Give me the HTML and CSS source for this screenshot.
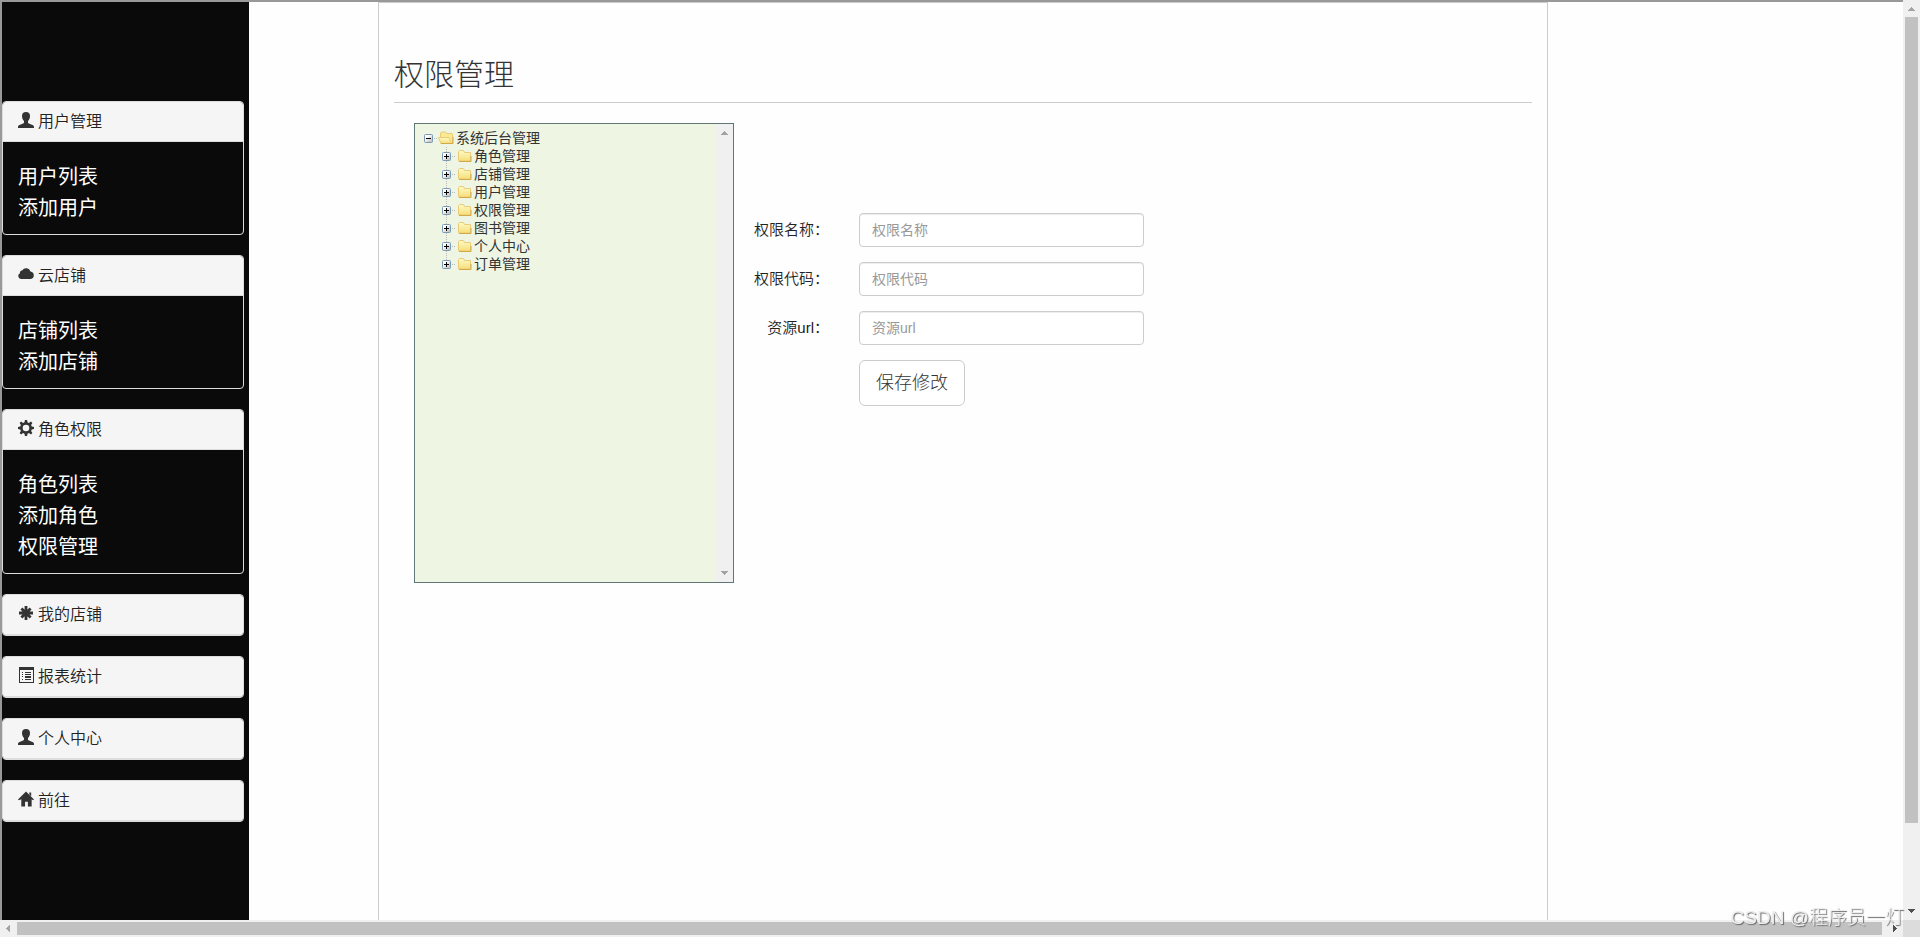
FILE: index.html
```html
<!DOCTYPE html>
<html lang="zh-CN">
<head>
<meta charset="utf-8">
<title>权限管理</title>
<link rel="stylesheet" href="styles.css">
</head>
<body>
<svg width="0" height="0" class="defs" aria-hidden="true">
  <defs>
    <linearGradient id="gold" x1="0" y1="0" x2="0" y2="1"><stop offset="0" stop-color="#fffbc4"/><stop offset="1" stop-color="#f5dd7a"/></linearGradient>
    <linearGradient id="box" x1="0" y1="0" x2="1" y2="1"><stop offset="0.3" stop-color="#fff"/><stop offset="1" stop-color="#b9b3ac"/></linearGradient>
    <symbol id="user" viewBox="0 0 16 16"><path d="M8 0C5.300 0 4 1.600 4 4c0 2 .7 3.900 2 5v1.600c0 .8-1.200 1.100-2.600 1.600C1.400 12.900 0 13.500 0 14.800V16h16v-1.200c0-1.300-1.400-1.900-3.400-2.600-1.400-.5-2.600-.8-2.600-1.600V9c1.300-1.100 2-3 2-5C12 1.600 10.700 0 8 0z"/></symbol>
    <symbol id="cloud" viewBox="0 0 16 16"><path d="M3 13a3 3 0 0 1-1-5.700A2.600 2.600 0 0 1 4.300 4.200 4.600 4.600 0 0 1 12.500 5.500 3.800 3.800 0 0 1 12.700 13z"/></symbol>
    <symbol id="cog" viewBox="0 0 16 16"><path fill-rule="evenodd" d="M6.900 0h2.200l.4 2.200 1.500.7 1.900-1.300 1.500 1.500-1.300 1.900.7 1.500 2.200.4v2.200l-2.200.4-.7 1.500 1.300 1.900-1.500 1.500-1.900-1.300-1.500.7-.4 2.200H6.900l-.4-2.200-1.500-.7-1.900 1.300-1.500-1.500 1.300-1.900-.7-1.500L0 9.100V6.900l2.200-.4L2.900 5 1.600 3.100l1.500-1.500L5 2.900l1.500-.7zM8 4.700a3.300 3.300 0 1 0 0 6.600 3.300 3.300 0 0 0 0-6.600z"/></symbol>
    <symbol id="asterisk" viewBox="0 0 16 16"><path d="M8 1v14M1 8h14M3.400 3.400l9.200 9.200M12.600 3.400l-9.200 9.200" stroke="#333" stroke-width="2.800"/></symbol>
    <symbol id="list" viewBox="0 0 16 16"><path fill-rule="evenodd" d="M1 0h15v16H1zM2 3v12h13V3z"/><path d="M4 5h1v1H4zM7 5h6v1H7zM4 7h1v1H4zM7 7h6v1H7zM4 9h1v1H4zM7 9h6v2H7zM4 12h1v1H4zM7 12h6v1H7z"/></symbol>
    <symbol id="home" viewBox="0 0 17 16"><path d="M8.500 0 17 8.500l-1 .8-1.500-1V16h-4v-5h-3v5h-4V8.300L1 9.300l-1-.8zM12 1h2v4l-2-2z"/></symbol>
    <symbol id="folder" viewBox="0 0 16 16"><path d="M2.500 3.500v9q0 .5.500.5h11q.5 0 .5-.5V5q0-.5-.5-.5H8.500l-1-2H3.500z" fill="url(#gold)" stroke="#e9cb78"/><path d="M3 13.500h12V8" fill="none" stroke="#d3a848"/></symbol>
    <symbol id="open" viewBox="0 0 16 16"><path d="M2.500 12V3l1-1h4l1 1.500h5.500l.5.500v9.500H3z" fill="#fbea92" stroke="#e9cb78"/><path d="M.5 7.500H11l2.500 6H3z" fill="url(#gold)" stroke="#e9cb78"/><path d="M3 13.500h12V7" fill="none" stroke="#d3a848"/></symbol>
    <symbol id="plus" viewBox="0 0 9 9"><rect x=".5" y=".5" width="8" height="8" rx="1" fill="url(#box)" stroke="#7898b5"/><path d="M2 4h5v1H2zM4 2h1v5H4z" fill="#000"/></symbol>
    <symbol id="minus" viewBox="0 0 9 9"><rect x=".5" y=".5" width="8" height="8" rx="1" fill="url(#box)" stroke="#7898b5"/><path d="M2 4h5v1H2z" fill="#000"/></symbol>
    <symbol id="tri-up" viewBox="0 0 7 4"><path d="M3 0h1v1h1v1h1v1h1v1H0V3h1V2h1V1h1z"/></symbol>
    <symbol id="tri-down" viewBox="0 0 7 4"><path d="M3 4h1V3h1V2h1V1h1V0H0v1h1v1h1v1h1z"/></symbol>
    <symbol id="tri-left" viewBox="0 0 4 7"><path d="M0 3v1h1v1h1v1h1v1h1V0H3v1H2v1H1v1z"/></symbol>
    <symbol id="tri-right" viewBox="0 0 4 7"><path d="M4 3v1H3v1H2v1H1v1H0V0h1v1h1v1h1v1z"/></symbol>
  </defs>
</svg>
<div class="window">
  <div class="frame">
    <nav class="sidebar">
      <section class="panel">
        <h3 class="panel-heading"><svg class="icon"><use href="#user"/></svg>用户管理</h3>
        <div class="panel-body"><a href="#">用户列表</a><a href="#">添加用户</a></div>
      </section>
      <section class="panel">
        <h3 class="panel-heading"><svg class="icon"><use href="#cloud"/></svg>云店铺</h3>
        <div class="panel-body"><a href="#">店铺列表</a><a href="#">添加店铺</a></div>
      </section>
      <section class="panel">
        <h3 class="panel-heading"><svg class="icon"><use href="#cog"/></svg>角色权限</h3>
        <div class="panel-body"><a href="#">角色列表</a><a href="#">添加角色</a><a href="#">权限管理</a></div>
      </section>
      <section class="panel"><h3 class="panel-heading"><svg class="icon"><use href="#asterisk"/></svg>我的店铺</h3></section>
      <section class="panel"><h3 class="panel-heading"><svg class="icon"><use href="#list"/></svg>报表统计</h3></section>
      <section class="panel"><h3 class="panel-heading"><svg class="icon"><use href="#user"/></svg>个人中心</h3></section>
      <section class="panel"><h3 class="panel-heading"><svg class="icon"><use href="#home"/></svg>前往</h3></section>
    </nav>
    <main class="content">
      <h1 class="title">权限管理</h1>
      <div class="columns">
        <div class="tree-box">
          <ul class="tree">
            <li>
              <div class="node"><button class="switch" aria-label="折叠"><svg><use href="#minus"/></svg></button><svg class="folder"><use href="#open"/></svg><a href="#">系统后台管理</a></div>
              <ul class="children">
                <li class="node"><button class="switch" aria-label="展开"><svg><use href="#plus"/></svg></button><svg class="folder"><use href="#folder"/></svg><a href="#">角色管理</a></li>
                <li class="node"><button class="switch" aria-label="展开"><svg><use href="#plus"/></svg></button><svg class="folder"><use href="#folder"/></svg><a href="#">店铺管理</a></li>
                <li class="node"><button class="switch" aria-label="展开"><svg><use href="#plus"/></svg></button><svg class="folder"><use href="#folder"/></svg><a href="#">用户管理</a></li>
                <li class="node"><button class="switch" aria-label="展开"><svg><use href="#plus"/></svg></button><svg class="folder"><use href="#folder"/></svg><a href="#">权限管理</a></li>
                <li class="node"><button class="switch" aria-label="展开"><svg><use href="#plus"/></svg></button><svg class="folder"><use href="#folder"/></svg><a href="#">图书管理</a></li>
                <li class="node"><button class="switch" aria-label="展开"><svg><use href="#plus"/></svg></button><svg class="folder"><use href="#folder"/></svg><a href="#">个人中心</a></li>
                <li class="node"><button class="switch" aria-label="展开"><svg><use href="#plus"/></svg></button><svg class="folder"><use href="#folder"/></svg><a href="#">订单管理</a></li>
              </ul>
            </li>
          </ul>
          <div class="bar vertical"><svg class="tri"><use href="#tri-up"/></svg><svg class="tri"><use href="#tri-down"/></svg></div>
        </div>
        <form class="form">
          <label for="name">权限名称：</label><input id="name" type="text" placeholder="权限名称">
          <label for="code">权限代码：</label><input id="code" type="text" placeholder="权限代码">
          <label for="url">资源url：</label><input id="url" type="text" placeholder="资源url">
          <button class="save" type="button">保存修改</button>
        </form>
      </div>
    </main>
  </div>
  <div class="bar vertical"><svg class="tri"><use href="#tri-up"/></svg><div class="track"><div class="thumb"></div></div><svg class="tri dark"><use href="#tri-down"/></svg></div>
  <div class="bar horizontal"><svg class="tri side"><use href="#tri-left"/></svg><div class="track"><div class="thumb"></div></div><svg class="tri side dark"><use href="#tri-right"/></svg></div>
  <div class="corner"></div>
</div>
<div class="watermark">CSDN @程序员一灯</div>
</body>
</html>
```

FILE: styles.css
```css
* { box-sizing: border-box; }
body {
  margin: 0;
  background: #fefefe;
  color: #333;
  font: 14px/20px "Liberation Sans", "Noto Sans CJK SC", sans-serif;
}
a { color: inherit; text-decoration: none; }
ul { margin: 0; padding: 0; list-style: none; }
.defs { position: absolute; }

.window {
  display: grid;
  grid-template: 1fr 17px / 1fr 17px;
  min-height: 100vh;
}
.frame {
  display: flex;
  border: solid #999;
  border-width: 2px 0 0 2px;
}

.sidebar {
  width: 247px;
  flex: none;
  padding: 99px 5px 20px 0;
  background: #0a0a0a;
}
.panel {
  margin-bottom: 20px;
  border: 1px solid #ddd;
  border-radius: 4px;
  overflow: hidden;
}
.panel-heading {
  display: flex;
  align-items: center;
  gap: 4px;
  height: 40px;
  margin: 0;
  padding: 1px 15px 0;
  border-bottom: 1px solid #ddd;
  background: #f5f5f5;
  color: #222;
  font-size: 16px;
  font-weight: 350;
}
.icon { width: 16px; height: 16px; margin-bottom: 4px; fill: #333; }
.panel-body { padding: 20px 15px 10px; }
.panel-body a {
  display: block;
  color: #fff;
  font-size: 20px;
  line-height: 31px;
}

.content {
  flex: 0 1 1170px;
  margin-left: 129px;
  padding: 0 15px;
  border: 1px solid #ccc;
  border-bottom: 0;
}
.title {
  margin: 0 0 20px;
  padding: 52px 0 8px;
  border-bottom: 1px solid #ccc;
  font-size: 30px;
  font-weight: 300;
  line-height: 39px;
}
.columns { display: flex; padding-left: 20px; }
.tree-box {
  display: flex;
  width: 320px;
  height: 460px;
  border: 1px solid #617775;
  background: #eef5e2;
}
.tree { flex: 1; padding: 5px 9px; }
.node { display: flex; align-items: center; height: 18px; }
.node a { margin-left: 2px; }
.switch {
  display: flex;
  align-items: center;
  width: 14px;
  height: 18px;
  padding: 0;
  border: 0;
  background: linear-gradient(90deg, #bbb 1px, transparent 1px) 10px 9px / 2px 1px repeat-x;
  background-clip: content-box;
}
.switch svg { width: 9px; height: 9px; }
.folder { width: 16px; height: 16px; }
.children {
  margin-left: 18px;
  background: repeating-linear-gradient(#bbb 0 1px, transparent 1px 2px) 4px 0 / 1px 117px no-repeat;
}

.form {
  display: grid;
  grid-template-columns: 95px 285px;
  column-gap: 30px;
  row-gap: 15px;
  align-content: start;
  align-items: center;
  padding-top: 90px;
}
.form label { text-align: right; font-size: 15px; font-weight: 350; color: #222; }
.form input {
  width: 100%;
  height: 34px;
  padding: 6px 12px;
  border: 1px solid #ccc;
  border-radius: 4px;
  background: #fff;
  box-shadow: inset 0 1px 1px rgba(0, 0, 0, .075);
  font: inherit;
}
.form input::placeholder { color: #999; }
.save {
  grid-column: 2;
  justify-self: start;
  height: 46px;
  padding: 0 16px;
  border: 1px solid #ccc;
  border-radius: 6px;
  background: #fff;
  color: #333;
  font: 300 18px/24px "Liberation Sans", "Noto Sans CJK SC", sans-serif;
}

.bar { display: flex; align-items: center; justify-content: space-between; background: #f0f0f0; }
.vertical { flex-direction: column; width: 17px; padding: 7px 0; }
.horizontal { height: 17px; padding: 0 6px; }
.tri { flex: none; width: 7px; height: 4px; fill: #a3a3a3; }
.side { width: 4px; height: 7px; }
.dark { fill: #505050; }
.track { flex: 1; }
.vertical .track { width: 13px; margin: 6px 0; }
.horizontal .track { height: 13px; margin: 0 7px; }
.thumb { background: #c1c1c1; }
.vertical .thumb { height: 91%; }
.horizontal .thumb { height: 100%; width: 99.8%; }
.corner { background: #dcdcdc; }

.watermark {
  position: fixed;
  right: 16px;
  bottom: 7px;
  color: #eee;
  font-size: 19px;
  font-weight: 300;
  line-height: 24px;
  text-shadow: 1px 1px 1px #666;
}
```
